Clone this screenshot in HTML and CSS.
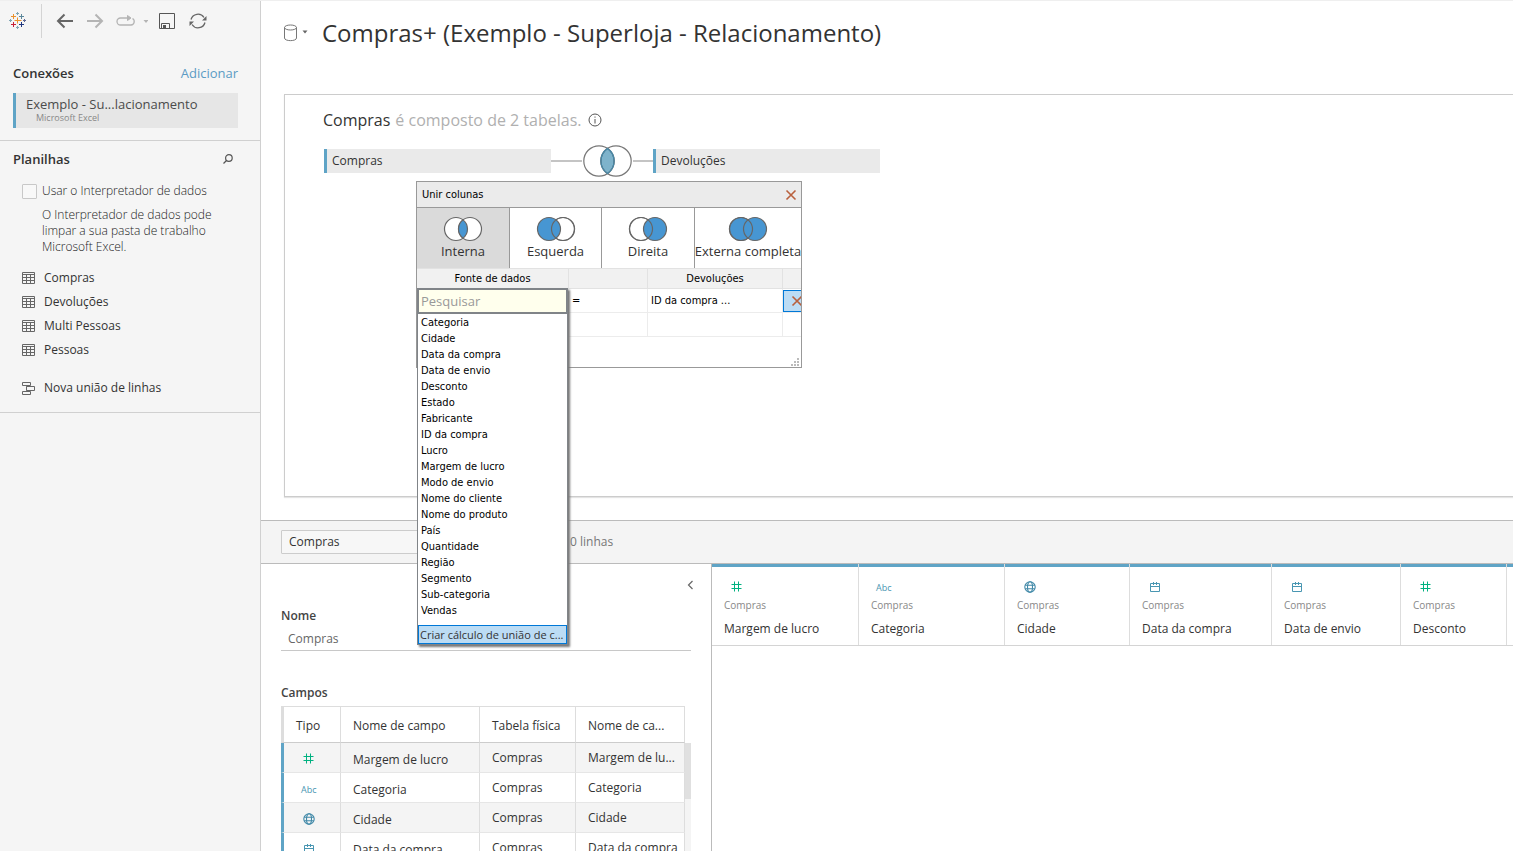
FILE: index.html
```html
<!DOCTYPE html>
<html lang="pt-BR">
<head>
<meta charset="utf-8">
<title>Compras+ (Exemplo - Superloja - Relacionamento)</title>
<link rel="stylesheet" href="styles.css">
</head>
<body>
<svg class="defs" aria-hidden="true">
  <symbol id="i-grid" viewBox="0 0 13 12"><path d="M.5.5h12v11H.5zM.5 2.5h12M.5 5.5h12M.5 8.5h12M4.500 2.5v9M8.500 2.5v9" fill="none" stroke="#666"/></symbol>
  <symbol id="i-num" viewBox="0 0 12 12"><path d="M.5 3.500h10M.5 7.500h10M3.500.5v10M7.500.5v10" fill="none" stroke="#00b180"/></symbol>
  <symbol id="i-globe" viewBox="0 0 12 12"><g fill="none" stroke="#4189a8" stroke-width="1.100"><circle cx="6" cy="6" r="5.200"/><ellipse cx="6" cy="6" rx="2.500" ry="5.200"/><path d="M1.200 4.300h9.600M1.200 7.700h9.600"/></g></symbol>
  <symbol id="i-date" viewBox="0 0 12 12"><path d="M1.500 2.500h9v8h-9zM1.500 5.500h9M4.500 1v3M7.500 1v3" fill="none" stroke="#4996b2"/></symbol>
</svg>
<div class="app">
  <aside class="sidebar">
    <div class="toolbar">
      <a class="logo" href="#" aria-label="Início"><svg width="18" height="18" viewBox="0 0 18 18" fill="none">
        <path d="M5.500 8.500h7M8.500 5.500v6" stroke="#eb912c"/>
        <path d="M2 4.500h5M4.500 2v5" stroke="#eb912c"/><path d="M10 4.500h5M12.500 2v5" stroke="#5b879b"/>
        <path d="M2 12.500h5M4.500 10v5" stroke="#c72037"/><path d="M10 12.500h5M12.500 10v5" stroke="#1f357e"/>
        <path d="M7 1.500h3M8.500 0v3M7 15.500h3M8.500 14v3M0 8.500h3M1.500 7v3" stroke="#7fa5b4"/><path d="M14 8.500h3M15.500 7v3" stroke="#5c6692"/>
      </svg></a>
      <button aria-label="Voltar"><svg width="17" height="16" viewBox="0 0 17 16" fill="none" stroke="#666" stroke-width="2"><path d="M17 8H2M8.500 1.500 2 8l6.500 6.500"/></svg></button>
      <button aria-label="Avançar"><svg width="17" height="16" viewBox="0 0 17 16" fill="none" stroke="#b4b4b4" stroke-width="2"><path d="M0 8h15M8.500 1.500 15 8l-6.500 6.500"/></svg></button>
      <button class="replay" aria-label="Repetir"><svg width="32" height="12" viewBox="0 0 32 12" fill="none" stroke="#b4b4b4"><path d="M13 3H4.500a3.500 3.500 0 0 0 0 7h10.500a3.500 3.500 0 0 0 1.500-6.500" stroke-width="1.300"/><path d="M11.500.5 15 3l-3.500 2.500z" fill="#b4b4b4"/><path d="M27.500 5h5L30 8z" fill="#b4b4b4" stroke="none"/></svg></button>
      <button aria-label="Salvar"><svg width="16" height="16" viewBox="0 0 16 16" fill="none" stroke="#555"><path d="M.5.5h15v15H.5zM2.500 15.500v-5h8v5"/><path d="M4 12h3v3H4z" fill="#555" stroke="none"/></svg></button>
      <button aria-label="Atualizar"><svg width="18" height="16" viewBox="0 0 18 16" fill="none" stroke="#666" stroke-width="1.300"><path d="M2 6.500A7.200 7.200 0 0 1 15 4.500M16 9.500A7.200 7.200 0 0 1 3 11.500"/><path d="M17.500 3v4.500H13zM.5 13V8.500H5z" fill="#666" stroke="none"/></svg></button>
    </div>
    <section class="connections">
      <div class="row"><h2>Conexões</h2><a href="#">Adicionar</a></div>
      <div class="connection"><span>Exemplo - Su...lacionamento</span><small>Microsoft Excel</small></div>
    </section>
    <section class="sheets">
      <div class="row"><h2>Planilhas</h2><button aria-label="Pesquisar planilhas"><svg width="10" height="10" viewBox="0 0 10 10" fill="none" stroke="#555" stroke-width="1.200"><circle cx="5.900" cy="4" r="3.300"/><path d="M3.500 6.500.5 9.500"/></svg></button></div>
      <label class="check"><input type="checkbox"><span>Usar o Interpretador de dados</span></label>
      <p>O Interpretador de dados pode limpar a sua pasta de trabalho Microsoft Excel.</p>
      <ul>
        <li><svg width="13" height="12"><use href="#i-grid"/></svg>Compras</li>
        <li><svg width="13" height="12"><use href="#i-grid"/></svg>Devoluções</li>
        <li><svg width="13" height="12"><use href="#i-grid"/></svg>Multi Pessoas</li>
        <li><svg width="13" height="12"><use href="#i-grid"/></svg>Pessoas</li>
        <li class="union"><svg width="13" height="13" viewBox="0 0 13 13" fill="none" stroke="#666"><path d="M.5.5h8v3h-8zM4.500 4.500h8v4h-8zM.5 9.500h8v3h-8zM4.500 3.500v1M4.500 8.500v1"/></svg>Nova união de linhas</li>
      </ul>
    </section>
  </aside>

  <main>
    <header>
      <button aria-label="Fonte de dados"><svg width="26" height="18" viewBox="0 0 26 18" fill="none" stroke="#777"><path d="M2.500 3.500v10.500c0 3.500 12 3.500 12 0V3.500"/><ellipse cx="8.500" cy="3.500" rx="6" ry="2.500"/><path d="M20.500 6.500h5L23 9.500z" fill="#666" stroke="none"/></svg></button>
      <h1>Compras+ (Exemplo - Superloja - Relacionamento)</h1>
    </header>

    <div class="canvas">
      <div class="heading"><b>Compras</b> é composto de 2 tabelas. <svg width="14" height="14" viewBox="0 0 14 14" fill="none" stroke="#555"><circle cx="7" cy="7" r="6"/><path d="M7 6v4.500M7 3.500v1.200"/></svg></div>
      <div class="join">
        <div class="tile">Compras</div>
        <i class="link"></i>
        <svg width="51" height="32" viewBox="0 0 51 32" fill="none" stroke="#777"><path d="M25.500 3.500a15.200 15.200 0 0 1 0 25a15.200 15.200 0 0 1 0-25z" fill="#7eb3cb"/><circle cx="17" cy="16" r="15.200" stroke-width="1.200"/><circle cx="34" cy="16" r="15.200" stroke-width="1.200"/><path d="M25.500 3.500a15.200 15.200 0 0 1 0 25a15.200 15.200 0 0 1 0-25z" stroke="#4588a8" stroke-width="1.300"/></svg>
        <i class="link short"></i>
        <div class="tile">Devoluções</div>
      </div>

      <div class="dialog" role="dialog" aria-label="Unir colunas">
        <div class="dialog-head"><span>Unir colunas</span><button aria-label="Fechar"><svg width="12" height="12" viewBox="0 0 12 12" stroke="#b9603d" stroke-width="1.600"><path d="m1.500 1.500 9 9m0-9-9 9"/></svg></button></div>
        <div class="types">
          <button class="on"><svg width="40" height="26" viewBox="0 0 40 26" stroke="#666" stroke-width="1.200"><g fill="#fff"><circle cx="13" cy="13" r="11.500"/><circle cx="27" cy="13" r="11.500"/></g><path d="M20 3.900a11.500 11.500 0 0 1 0 18.200a11.500 11.500 0 0 1 0-18.200z" fill="#4796d2"/></svg>Interna</button>
          <button><svg width="40" height="26" viewBox="0 0 40 26" stroke="#666" stroke-width="1.200"><circle cx="27" cy="13" r="11.500" fill="#fff"/><circle cx="13" cy="13" r="11.500" fill="#4796d2"/><circle cx="27" cy="13" r="11.500" fill="none"/></svg>Esquerda</button>
          <button><svg width="40" height="26" viewBox="0 0 40 26" stroke="#666" stroke-width="1.200"><circle cx="13" cy="13" r="11.500" fill="#fff"/><circle cx="27" cy="13" r="11.500" fill="#4796d2"/><circle cx="13" cy="13" r="11.500" fill="none"/></svg>Direita</button>
          <button><svg width="40" height="26" viewBox="0 0 40 26" stroke="#666" stroke-width="1.200"><circle cx="13" cy="13" r="11.500" fill="#4796d2"/><circle cx="27" cy="13" r="11.500" fill="#4796d2"/><circle cx="13" cy="13" r="11.500" fill="none"/></svg>Externa completa</button>
        </div>
        <table class="clauses">
          <colgroup><col class="c-left"><col class="c-op"><col class="c-right"><col></colgroup>
          <tr><th>Fonte de dados</th><th></th><th>Devoluções</th><th></th></tr>
          <tr><td></td><td>=</td><td>ID da compra ...</td><td class="del"><button aria-label="Remover"><svg width="10" height="12" viewBox="0 0 10 12" stroke="#b9603d" stroke-width="1.600"><path d="m1.500 1.500 9 9m0-9-9 9"/></svg></button></td></tr>
          <tr><td></td><td></td><td></td><td></td></tr>
        </table>
        <svg class="grip" width="9" height="9" viewBox="0 0 9 9" fill="#bbb"><path d="M6 0h2v2H6zM3 3h2v2H3zM6 3h2v2H6zM0 6h2v2H0zM3 6h2v2H3zM6 6h2v2H6z"/></svg>
        <div class="menu">
          <input type="text" placeholder="Pesquisar" aria-label="Pesquisar">
          <ul>
            <li>Categoria</li><li>Cidade</li><li>Data da compra</li><li>Data de envio</li><li>Desconto</li><li>Estado</li><li>Fabricante</li><li>ID da compra</li><li>Lucro</li><li>Margem de lucro</li><li>Modo de envio</li><li>Nome do cliente</li><li>Nome do produto</li><li>País</li><li>Quantidade</li><li>Região</li><li>Segmento</li><li>Sub-categoria</li><li>Vendas</li>
          </ul>
          <button>Criar cálculo de união de c...</button>
        </div>
      </div>
    </div>

    <div class="gridbar">
      <select aria-label="Tabela"><option>Compras</option></select>
      <span>0 linhas</span>
    </div>

    <div class="lower">
      <section class="meta">
        <button class="collapse" aria-label="Recolher"><svg width="7" height="10" viewBox="0 0 7 10" fill="none" stroke="#666" stroke-width="1.200"><path d="M5.500 1 1.500 5l4 4"/></svg></button>
        <label for="nm">Nome</label>
        <input id="nm" type="text" value="Compras">
        <h3>Campos</h3>
        <div class="fields-wrap">
          <table class="fields">
            <colgroup><col class="f-type"><col class="f-name"><col class="f-table"><col></colgroup>
            <thead><tr><th>Tipo</th><th>Nome de campo</th><th>Tabela física</th><th>Nome de ca...</th></tr></thead>
            <tbody>
              <tr><td><svg width="12" height="12"><use href="#i-num"/></svg></td><td>Margem de lucro</td><td>Compras</td><td>Margem de lu...</td></tr>
              <tr><td><span class="abc">Abc</span></td><td>Categoria</td><td>Compras</td><td>Categoria</td></tr>
              <tr><td><svg width="12" height="12"><use href="#i-globe"/></svg></td><td>Cidade</td><td>Compras</td><td>Cidade</td></tr>
              <tr><td><svg width="12" height="12"><use href="#i-date"/></svg></td><td>Data da compra</td><td>Compras</td><td>Data da compra</td></tr>
            </tbody>
          </table>
          <div class="scroll"><i></i></div>
        </div>
      </section>
      <section class="data">
        <div class="cols">
          <div class="col w1"><svg width="12" height="12"><use href="#i-num"/></svg><small>Compras</small><b>Margem de lucro</b></div>
          <div class="col w2"><span class="abc">Abc</span><small>Compras</small><b>Categoria</b></div>
          <div class="col w3"><svg width="12" height="12"><use href="#i-globe"/></svg><small>Compras</small><b>Cidade</b></div>
          <div class="col w4"><svg width="12" height="12"><use href="#i-date"/></svg><small>Compras</small><b>Data da compra</b></div>
          <div class="col w5"><svg width="12" height="12"><use href="#i-date"/></svg><small>Compras</small><b>Data de envio</b></div>
          <div class="col w6"><svg width="12" height="12"><use href="#i-num"/></svg><small>Compras</small><b>Desconto</b></div>
          <div class="col rest"></div>
        </div>
      </section>
    </div>
  </main>
</div>
</body>
</html>
```
FILE: styles.css
```css
* { box-sizing: border-box; }
body { margin: 0; font: 12px/16px "Open Sans", sans-serif; color: #333; background: #fff; }
h1, h2, h3, p, ul { margin: 0; padding: 0; font-weight: 400; }
ul { list-style: none; }
button { margin: 0; padding: 0; border: 0; background: none; font: inherit; color: inherit; display: block; }
input, select { font: inherit; margin: 0; }
svg { display: block; flex: none; }
.defs { position: absolute; width: 0; height: 0; }

.app { display: grid; grid-template-columns: 261px minmax(0, 1fr); height: 100vh; overflow: hidden; border-top: 1px solid #efefef; }

/* Sidebar */
.sidebar { background: #f5f5f5; border-right: 1px solid #d0d0d0; }
.toolbar { display: flex; align-items: center; gap: 14px; height: 40px; }
.logo { display: flex; align-items: center; height: 34px; padding: 0 14px 0 9px; border-right: 1px solid #d4d4d4; }
.toolbar .replay { margin: 0 -3px 0 -2px; }
.row { display: flex; align-items: center; justify-content: space-between; }
.connections { padding: 24px 22px 12px 13px; border-bottom: 1px solid #d0d0d0; }
h2 { font-size: 13px; font-weight: 600; color: #333; }
.row a { font-size: 13px; color: #5b9bc4; text-decoration: none; }
.connection { display: flex; flex-direction: column; margin-top: 12px; padding: 3px 0 4px 10px; background: #e6e6e6; border-left: 3px solid #5fa4c6; }
.connection span { font-size: 13px; color: #4b4b4b; }
.connection small { font-size: 9px; line-height: 12px; color: #888; padding-left: 10px; }
.sheets { padding: 10px 22px 12px 13px; border-bottom: 1px solid #d0d0d0; }
.sheets .row { padding-right: 5px; }
.check { display: flex; align-items: center; gap: 5px; margin: 16px 0 8px 9px; font-weight: 300; color: #222; }
.check input { appearance: none; width: 15px; height: 15px; border: 1px solid #c8c8c8; border-radius: 1px; background: #f8f8f8; }
.sheets p { margin-left: 29px; margin-right: 20px; font-weight: 300; color: #222; }
.sheets ul { margin: 11px 0 0 9px; }
.sheets li { display: flex; align-items: center; gap: 9px; height: 24px; }
.sheets .union { margin-top: 14px; }

/* Main */
main { display: flex; flex-direction: column; min-width: 0; }
header { display: flex; align-items: center; gap: 14px; padding: 16px 20px 45px 21px; }
h1 { font-size: 24px; line-height: 32px; color: #333; white-space: nowrap; }
.canvas { position: relative; min-height: 403px; margin-left: 23px; padding: 16px 0 0 38px; border: solid #ccc; border-width: 1px 0 1px 1px; box-shadow: 0 1px 1px #e4e4e4; }
.heading { display: flex; align-items: center; gap: 5px; font-size: 16px; line-height: 18px; color: #b0b0b0; }
.heading b { font-weight: 400; color: #333; }
.heading svg { margin-left: 2px; }
.join { display: flex; align-items: center; margin: 16px 0 0 1px; }
.tile { width: 227px; height: 24px; padding-left: 5px; line-height: 23px; background: #eaeaea; border-left: 3px solid #5fa4c6; }
.link { width: 31px; height: 2px; background: #c4c4c4; }
.short { width: 20px; }

/* Join dialog */
.dialog { position: absolute; left: 131px; top: 86px; width: 386px; height: 187px; background: #fff; border: 1px solid #999; font-family: "DejaVu Sans Condensed", sans-serif; font-size: 11px; color: #000; }
.dialog-head { display: flex; align-items: center; justify-content: space-between; height: 26px; padding: 0 4px 0 5px; background: #ebebeb; border-bottom: 1px solid #999; }
.types { display: flex; }
.types button { display: flex; flex-direction: column; align-items: center; flex: 0 0 auto; width: 93px; height: 60px; padding-top: 8px; border-right: 1px solid #999; font: 13px/18px "Open Sans", sans-serif; color: #333; white-space: nowrap; }
.types button:nth-child(2) { width: 92px; }
.types button:last-child { width: 106px; border: 0; }
.types .on { background: #dadada; }
.clauses { width: 384px; table-layout: fixed; border-collapse: separate; border-spacing: 0; }
.c-left { width: 152px; } .c-op { width: 79px; } .c-right { width: 135px; }
.clauses th { height: 21px; padding: 0; background: #f1f1f1; border: solid #e2e2e2; border-width: 1px 1px 1px 0; font-weight: 400; }
.clauses td { height: 24px; padding: 0 0 0 3px; border-right: 1px solid #ececec; border-bottom: 1px solid #ececec; }
.clauses th:last-child, .clauses td:last-child { border-right: 0; }
.clauses .del { padding: 0; }
.del button { display: flex; align-items: center; justify-content: flex-end; width: 18px; height: 22px; margin-left: auto; background: #bcdcf4; border: 1px solid #0078d7; border-right: 0; }
.grip { position: absolute; right: 1px; bottom: 0; }
.menu { position: absolute; left: 0; top: 106px; width: 151px; background: #fff; border: 1px solid #808488; box-shadow: 2px 2px 2px #777; }
.menu input { display: block; width: 100%; height: 25px; padding: 0 2px; border: 2px solid #808488; border-width: 1px 1px 2px; background: #ffffed; font: 13px "Open Sans", sans-serif; outline: 0; border-radius: 0; }
.menu input::placeholder { color: #999; opacity: 1; }
.menu ul { padding: 1px 3px 6px; }
.menu button { width: 100%; height: 19px; padding: 0 1px; font: 11px/16px "Open Sans", sans-serif; text-align: left; white-space: nowrap; background: #bcdcf4; border: 1px solid #0078d7; color: #333; }

/* Grid bar */
.gridbar { display: flex; align-items: center; gap: 49px; height: 44px; margin-top: 23px; padding-left: 20px; background: #f4f4f4; border: solid #bbb; border-width: 1px 0; }
.gridbar select { appearance: none; width: 240px; height: 24px; padding: 0 7px; border: 1px solid #ccc; border-radius: 1px; background: #f7f7f7; color: #333; }
.gridbar span { color: #777; }

/* Lower panes */
.lower { display: flex; flex: 1; min-height: 0; overflow: hidden; }
.meta { width: 451px; flex: none; padding: 16px 20px 0; border-right: 1px solid #bbb; }
.collapse { margin: 0 -3px 0 auto; }
.meta label { display: block; margin-top: 18px; font-weight: 600; color: #444; }
.meta > input { display: block; width: 100%; height: 27px; padding: 3px 7px 0; border: 0; border-bottom: 1px solid #c8c8c8; color: #666; outline: 0; }
h3 { margin-top: 34px; font-size: 12px; font-weight: 600; color: #444; }
.fields-wrap { display: flex; margin-top: 5px; }
.fields { flex: 1; table-layout: fixed; border-collapse: separate; border-spacing: 0; width: 404px; }
.f-type { width: 60px; } .f-name { width: 139px; } .f-table { width: 96px; }
.fields th { height: 37px; padding: 2px 0 0 12px; border-top: 1px solid #ddd; border-bottom: 1px solid #ccc; border-right: 1px solid #ddd; text-align: left; font-weight: 400; white-space: nowrap; }
.fields th:first-child { border-left: 3px solid #ddd; }
.fields td { height: 30px; padding: 1px 0 0 12px; border-right: 1px solid #ddd; border-bottom: 1px solid #e6e6e6; white-space: nowrap; }
.fields td:first-child { border-left: 3px solid #5fa4c6; padding: 2px 0 0 17px; }
.fields td:first-child svg { margin-left: 2px; }
.fields td:nth-child(2) { padding-top: 5px; }
.fields tr:nth-child(odd) td { background: #f4f4f4; }
.abc { font-size: 9px; line-height: 12px; color: #4996b2; }
.scroll { width: 6px; padding-top: 37px; background: linear-gradient(#f4f4f4, #f4f4f4) 0 37px no-repeat; }
.scroll i { display: block; height: 56px; background: #e0e0e0; }
.data { flex: 1; min-width: 0; }
.cols { display: flex; height: 82px; border-bottom: 1px solid #d4d4d4; }
.col { display: flex; flex-direction: column; align-items: flex-start; flex: none; padding: 14px 0 0 12px; border-right: 1px solid #ddd; background: linear-gradient(#5fa4c6, #5fa4c6) 0 0 / 100% 3px no-repeat; }
.col svg, .col .abc { height: 12px; margin: 3px 0 0 7px; }
.col .abc { margin: 4px 0 -1px 5px; }
.col small { margin-top: 5px; font-size: 10px; font-weight: 400; line-height: 14px; color: #888; }
.col b { margin-top: 9px; font-weight: 400; }
.w1 { width: 147px; } .w2 { width: 146px; } .w3 { width: 125px; } .w4 { width: 142px; } .w5 { width: 129px; } .w6 { width: 106px; }
.rest { flex: 1; border-right: 0; }
```
